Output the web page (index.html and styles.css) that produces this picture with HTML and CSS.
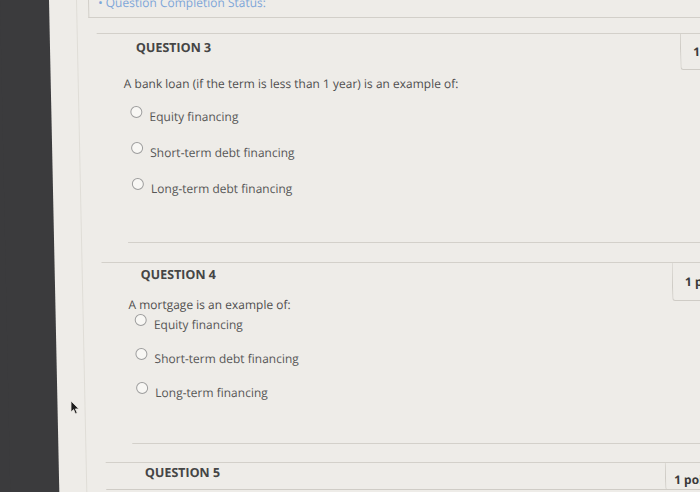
FILE: index.html
```html
<!DOCTYPE html>
<html lang="en">
<head>
<meta charset="utf-8">
<title>Quiz</title>
<link rel="stylesheet" href="styles.css">
</head>
<body>
<div class="page">
  <div class="strip"></div>
  <div class="main">
    <div class="col">
      <div class="status"><div class="status-text">• Question Completion Status:</div></div>

      <section class="q q3">
        <div class="qhead">
          <h2 class="qtitle">QUESTION 3</h2>
          <div class="pts">1 points</div>
        </div>
        <p class="prompt">A bank loan (if the term is less than 1 year) is an example of:</p>
        <ul class="opts">
          <li class="opt"><span class="radio"></span><span>Equity financing</span></li>
          <li class="opt"><span class="radio"></span><span>Short-term debt financing</span></li>
          <li class="opt"><span class="radio"></span><span>Long-term debt financing</span></li>
        </ul>
        <div class="sep"></div>
      </section>

      <section class="q q4">
        <div class="qhead">
          <h2 class="qtitle">QUESTION 4</h2>
          <div class="pts">1 points</div>
        </div>
        <p class="prompt">A mortgage is an example of:</p>
        <ul class="opts">
          <li class="opt"><span class="radio"></span><span>Equity financing</span></li>
          <li class="opt"><span class="radio"></span><span>Short-term debt financing</span></li>
          <li class="opt"><span class="radio"></span><span>Long-term financing</span></li>
        </ul>
        <div class="sep"></div>
      </section>

      <section class="q q5">
        <div class="qhead">
          <h2 class="qtitle">QUESTION 5</h2>
          <div class="pts">1 points</div>
        </div>
      </section>
    </div>
  </div>
</div>
<svg class="cursor" width="10" height="15" viewBox="0 0 10 15" aria-hidden="true">
  <path d="M1 1 L1 12 L3.6 9.6 L5.4 13.8 L7.2 13 L5.4 8.9 L8.8 8.9 Z" fill="#1c1c1c" stroke="#e8e6e1" stroke-width="0.8" stroke-linejoin="round"/>
</svg>
</body>
</html>
```

FILE: styles.css
```css
html, body {
  margin: 0;
  height: 100%;
  overflow: hidden;
  background: #3b3b3d;
}

body {
  font-family: "Open Sans", "DejaVu Sans", sans-serif;
  position: relative;
}

.page {
  display: flex;
  width: 720px;
  height: 492px;
  transform: skewX(1.2deg);
  transform-origin: 0 0;
}

.strip {
  flex: none;
  width: 49px;
  background: #3b3b3d;
}

.main {
  flex: 1;
  background: #eeece8;
  padding-left: 27px;
}

.col {
  height: 100%;
  border-left: 1px solid #e0ddd7;
}

.status {
  display: flex;
  height: 17px;
  margin-left: 11px;
  border-left: 1px solid #d2cfc9;
  border-bottom: 1px solid #d2cfc9;
}

.status-text {
  margin-top: -6px;
  padding-left: 9px;
  font-size: 12px;
  line-height: 18px;
  color: #7ea6d8;
  white-space: nowrap;
}

.q {
  margin-left: 19px;
  border-top: 1px solid #d3d0ca;
}

.q3 { margin-top: 15px; }
.q4 { margin-top: 19px; }
.q5 { margin-top: 18px; }

.qhead {
  display: flex;
  height: 28px;
}

.qtitle {
  flex: 1;
  margin: 0;
  padding: 5px 0 0 39px;
  font-size: 12.5px;
  font-weight: 700;
  line-height: 18px;
  color: #454545;
}

.q4 .qtitle { padding-top: 3px; }
.q5 .qtitle { padding-top: 1px; }

.pts {
  align-self: flex-start;
  box-sizing: border-box;
  height: 36px;
  width: 41px;
  padding: 10px 0 0 12px;
  border-left: 1px solid #cfccc6;
  border-bottom: 1px solid #cfccc6;
  border-bottom-left-radius: 3px;
  font-size: 12px;
  font-weight: 700;
  line-height: 15px;
  color: #3a3a3a;
  white-space: nowrap;
  overflow: hidden;
}

.q4 .pts { width: 54px; height: 38px; padding-top: 11px; }
.q5 .pts { width: 65px; height: 27px; padding: 9px 0 0 8px; border-bottom: none; }

.q5 .qhead {
  height: 26px;
  border-bottom: 1px solid #cfccc6;
}

.prompt {
  margin: 13px 0 0;
  padding-left: 26px;
  font-size: 12px;
  line-height: 18px;
  color: #4e4e4e;
}

.q4 .prompt { margin-top: 5px; }

.opts {
  list-style: none;
  margin: 15px 0 0;
  padding: 0 0 0 32px;
  display: flex;
  flex-direction: column;
  gap: 18px;
}

.q4 .opts {
  margin-top: 2px;
  gap: 16px;
}

.opt {
  display: flex;
  align-items: flex-start;
  gap: 7px;
  font-size: 12px;
  line-height: 18px;
  color: #565656;
}

.radio {
  flex: none;
  box-sizing: border-box;
  width: 12px;
  height: 12px;
  margin-top: -2px;
  border: 1px solid #9d9d9d;
  border-radius: 50%;
  background: #f8f7f4;
}

.sep {
  margin: 44px 0 0 27px;
  border-top: 1px solid #d3d0ca;
}

.q4 .sep { margin-top: 41px; }

.cursor {
  position: absolute;
  left: 70px;
  top: 400px;
}
```
